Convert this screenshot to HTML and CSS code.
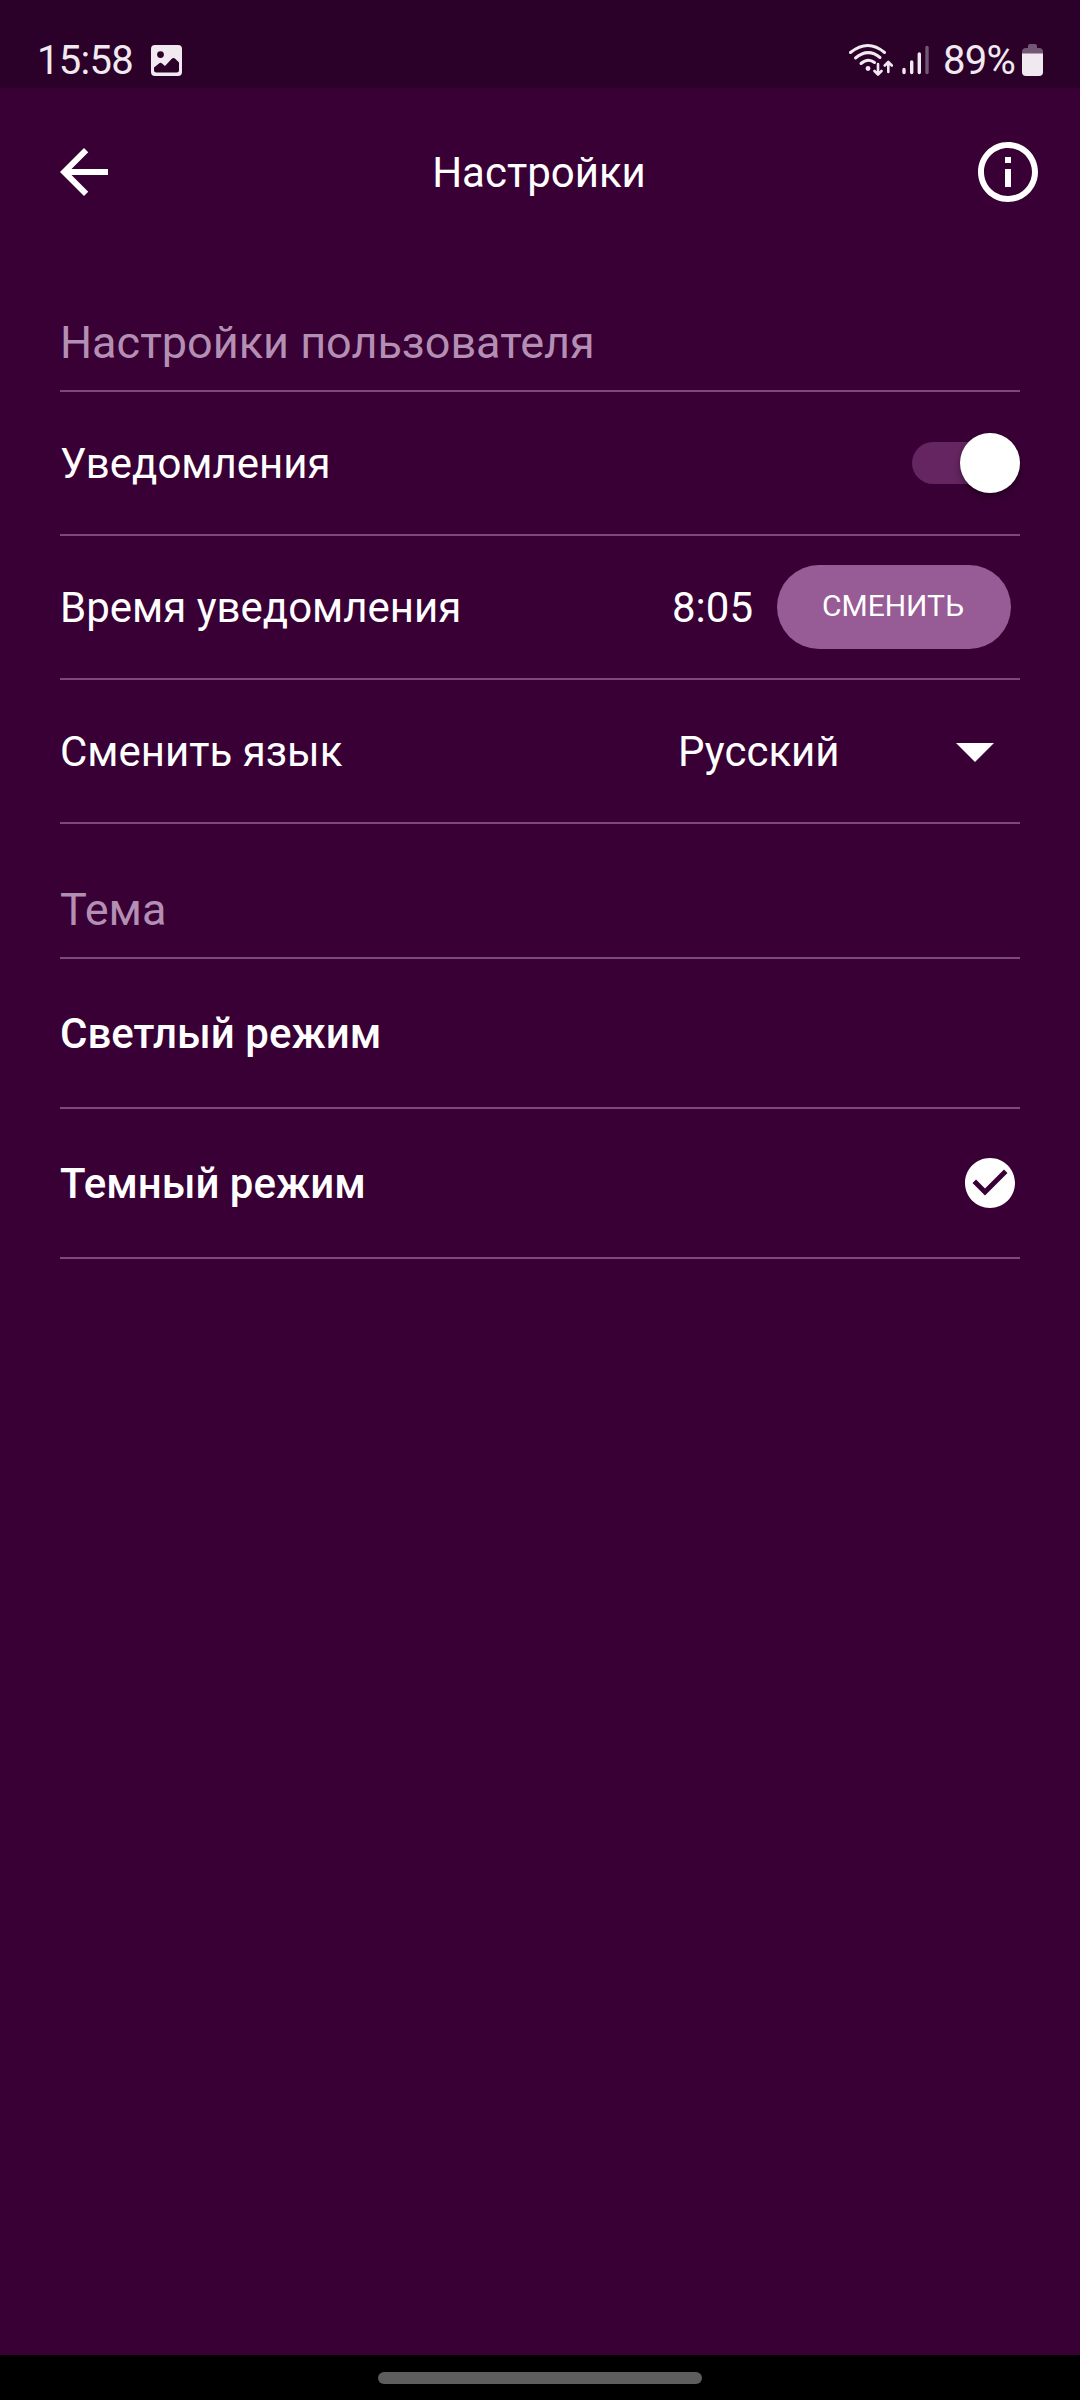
FILE: index.html
```html
<!DOCTYPE html>
<html lang="ru">
<head>
<meta charset="utf-8">
<title>Настройки</title>
<link rel="stylesheet" href="styles.css">
</head>
<body>
<div class="screen">
  <div class="status">
    <span class="clock">15:58</span>
    <svg class="photo" width="31" height="31" viewBox="0 0 31 31"><path fill="#f0eaf0" fill-rule="evenodd" d="M4 0H27Q31 0 31 4V27Q31 31 27 31H4Q0 31 0 27V4Q0 0 4 0ZM9.500 6.200A3.400 3.400 0 1 0 9.500 13A3.400 3.400 0 1 0 9.500 6.200ZM3 24V22.500L8 18.500Q9.500 17.200 11 18.500L14 21L20.500 14Q22.500 12 24.500 14L28 17.500V25Q28 27.500 25.500 27.500H5.500Q3 27.500 3 25Z"/></svg>
    <svg class="wifi" width="44" height="34" viewBox="0 0 44 34" fill="none" stroke="#f0eaf0" stroke-linecap="round">
      <g stroke-width="3"><path d="M1.500 9.500Q19 -4.500 35.500 9.500"/><path d="M6.500 15Q19 4.500 31 14.500"/><path d="M12 20.500Q19 14.500 25.500 19.500"/></g>
      <circle cx="19" cy="25.500" r="2.400" fill="#f0eaf0" stroke="none"/>
      <path stroke-width="2.600" stroke-linejoin="round" d="M29 21V31M25.500 28L29 31.500L32.500 28M39.300 29V19.500M35.800 22.500L39.300 19L42.800 22.500"/>
    </svg>
    <svg class="signal" width="28" height="30" viewBox="0 0 28 30" stroke="#f0eaf0" stroke-width="3.400" stroke-linecap="round"><path d="M2 24.500V27.500M9.700 17V27.500M17.300 9V27.500"/><path d="M25 2.500V27.500" stroke="#745873"/></svg>
    <span class="percent">89%</span>
    <svg class="battery" width="21" height="32" viewBox="0 0 21 32"><path fill="#745873" d="M6 2Q6 0 8 0H13Q15 0 15 2V4H17Q21 4 21 8V10H0V8Q0 4 4 4H6Z"/><path fill="#f0eaf0" d="M0 9.500H21V28Q21 32 17 32H4Q0 32 0 28Z"/></svg>
  </div>
  <header class="bar">
    <svg width="72" height="72" viewBox="0 0 24 24" fill="#fff"><path d="M20 11H7.830l5.590-5.590L12 4l-8 8 8 8 1.410-1.410L7.830 13H20v-2z"/></svg>
    <h1 class="title">Настройки</h1>
    <svg width="72" height="72" viewBox="0 0 24 24" fill="#fff"><path d="M11 7h2v2h-2zm0 4h2v6h-2zm1-9C6.480 2 2 6.480 2 12s4.480 10 10 10 10-4.480 10-10S17.520 2 12 2zm0 18c-4.410 0-8-3.590-8-8s3.590-8 8-8 8 3.590 8 8-3.590 8-8 8z"/></svg>
  </header>
  <main class="content">
    <h2 class="section first">Настройки пользователя</h2>
    <div class="row"><span class="label">Уведомления</span><span class="switch"><span class="knob"></span></span></div>
    <div class="row"><span class="label">Время уведомления</span><span class="time">8:05</span><button class="change">СМЕНИТЬ</button></div>
    <div class="row"><span class="label">Сменить язык</span><span class="select"><span>Русский</span><svg class="arrow" width="38" height="19" viewBox="0 0 38 19" fill="#fff"><path d="M0 0H38L19 19Z"/></svg></span></div>
    <h2 class="section">Тема</h2>
    <div class="row mode"><span class="label">Светлый режим</span></div>
    <div class="row mode"><span class="label">Темный режим</span><svg width="60" height="60" viewBox="0 0 24 24" fill="#fff"><path d="M12 2C6.480 2 2 6.480 2 12s4.480 10 10 10 10-4.480 10-10S17.520 2 12 2zm-2 15l-5-5 1.410-1.410L10 14.170l7.590-7.590L19 8l-9 9z"/></svg></div>
  </main>
  <div class="nav"><div class="handle"></div></div>
</div>
</body>
</html>
```
FILE: styles.css
```css
* { box-sizing: border-box; }
body { margin: 0; background: #390035; }
svg { display: block; flex: none; }
.screen {
  width: 1080px;
  height: 2400px;
  display: flex;
  flex-direction: column;
  background: #390035;
  color: #fff;
  font-family: Roboto, sans-serif;
  font-size: 42px;
}
.status {
  height: 88px;
  padding: 34px 37px 0 37px;
  display: flex;
  align-items: flex-start;
  background: #2b0029;
  color: #f0eaf0;
  font-size: 40px;
  line-height: 54px;
}
.clock { width: 114px; letter-spacing: -0.7px; }
.photo { margin-top: 11px; }
.wifi { margin: 9px 0 0 auto; }
.signal { margin: 11px 0 0 9px; }
.percent { width: 79px; margin-left: 13px; letter-spacing: -0.7px; }
.battery { margin-top: 10px; }
.bar {
  height: 168px;
  padding: 0 36px 0 48px;
  display: grid;
  grid-template-columns: 72px 1fr 72px;
  align-items: center;
}
.title {
  margin: 0;
  padding-right: 14px;
  font-size: 42px;
  font-weight: 400;
  text-align: center;
}
.content { flex: 1; padding: 0 60px; }
.section {
  height: 135px;
  margin: 0;
  padding-bottom: 18px;
  display: flex;
  align-items: flex-end;
  border-bottom: 2px solid #7b4a78;
  color: #b48fb4;
  font-size: 45px;
  font-weight: 400;
  line-height: 58px;
}
.first { height: 136px; }
.row {
  height: 144px;
  display: flex;
  align-items: center;
  border-bottom: 2px solid #7b4a78;
}
.mode { height: 150px; font-weight: 500; }
.label { flex: 1; }
.switch {
  width: 108px;
  height: 42px;
  display: flex;
  align-items: center;
  justify-content: flex-end;
  border-radius: 21px;
  background: #652560;
}
.knob {
  width: 60px;
  height: 60px;
  border-radius: 50%;
  background: #fff;
  box-shadow: 0 3px 6px rgba(0, 0, 0, 0.4);
}
.change {
  width: 234px;
  height: 84px;
  margin: 0 9px 0 24px;
  padding: 0 2px 3px 0;
  border: 0;
  border-radius: 42px;
  background: #975b96;
  color: #fff;
  font: 400 30px Roboto, sans-serif;
}
.select {
  width: 342px;
  padding-right: 26px;
  display: flex;
  align-items: center;
  justify-content: space-between;
}
.arrow { margin-top: 3px; }
.nav {
  height: 45px;
  padding-top: 17px;
  background: #000;
}
.handle {
  width: 324px;
  height: 12px;
  margin: 0 auto;
  border-radius: 6px;
  background: #5e5e5e;
}
```
